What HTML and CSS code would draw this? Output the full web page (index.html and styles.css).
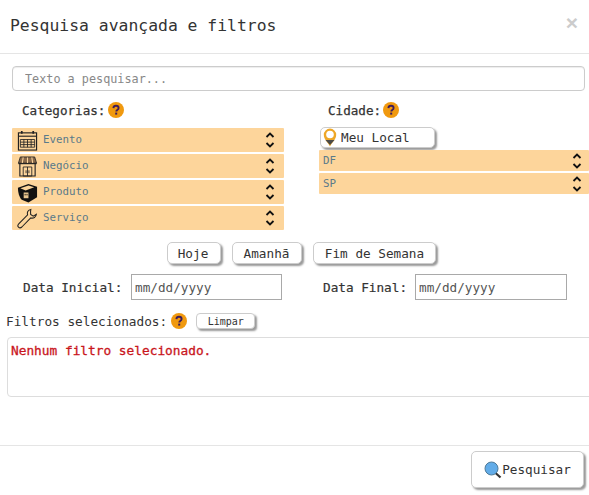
FILE: index.html
```html
<!DOCTYPE html>
<html lang="pt">
<head>
<meta charset="utf-8">
<title>Pesquisa avançada e filtros</title>
<link rel="stylesheet" href="styles.css">
</head>
<body>
<svg class="defs" width="0" height="0">
  <symbol id="help" viewBox="0 0 16 16">
    <circle cx="8" cy="8" r="8" fill="#f0990f"/>
    <path d="M5.400 6.100C5.500 4.600 6.600 3.800 8 3.800c1.500 0 2.600.9 2.600 2.100 0 1.200-.8 1.700-1.500 2.200-.6.4-.8.7-.8 1.400" fill="none" stroke="#3d1c5c" stroke-width="1.900"/>
    <rect x="7.200" y="10.600" width="2" height="2" fill="#3d1c5c"/>
  </symbol>
  <symbol id="updown" viewBox="0 0 10 18">
    <path d="M1.500 6 5 2.500 8.500 6M1.500 12 5 15.500 8.500 12" fill="none" stroke="#111" stroke-width="1.800"/>
  </symbol>
</svg>

<header class="modal-header">
  <h4 class="modal-title">Pesquisa avançada e filtros</h4>
  <span class="close">×</span>
</header>

<main class="modal-body">
  <input class="search" type="text" placeholder="Texto a pesquisar...">

  <div class="columns">
    <section class="col-left">
      <div class="label label-cat">Categorias:<svg class="help"><use href="#help"/></svg></div>
      <div class="rows">
        <div class="row row-cat">
          <svg class="cat-icon" viewBox="0 0 22 22">
            <rect x="1.500" y="3" width="19" height="18" fill="none" stroke="#222" stroke-width="1.200"/>
            <path d="M1.500 6.500h19" stroke="#222" stroke-width="1.200"/>
            <path d="M5 1v3M17 1v3" stroke="#222" stroke-width="1.800"/>
            <path d="M3.500 10h15v8h-15zM3.500 12.700h15M3.500 15.300h15M7.200 10v8M11 10v8M14.800 10v8" fill="none" stroke="#222" stroke-width=".9"/>
          </svg>
          <span class="row-text">Evento</span>
          <svg class="updown"><use href="#updown"/></svg>
        </div>
        <div class="row row-cat">
          <svg class="cat-icon" viewBox="0 0 22 22">
            <path d="M3.500 1h15l2 6.500h-19z" fill="#8a6a4a" stroke="#222" stroke-width=".9"/>
            <path d="M6.500 1.500 5.500 7.500M11 1.500v6M15.500 1.500l1 6" stroke="#fdd59b" stroke-width="1.100"/>
            <path d="M3 8v13h16V8" fill="none" stroke="#222" stroke-width="1.200"/>
            <path d="M1.500 8h19" stroke="#222" stroke-width="1.200"/>
            <path d="M6.500 11.500h9V21h-9zM11 11.500V21" fill="none" stroke="#222" stroke-width=".9"/>
            <path d="M9.500 15v3M12.500 15v3" stroke="#222" stroke-width=".9"/>
          </svg>
          <span class="row-text">Negócio</span>
          <svg class="updown"><use href="#updown"/></svg>
        </div>
        <div class="row row-cat">
          <svg class="cat-icon" viewBox="0 0 22 22">
            <path d="M1 6 12 2l9 3v11l-9 5.500-7-3C2 16 1 10 1 6z" fill="#111"/>
            <path d="M3.500 6.500 12 3.700l6 1.800-9 3.500z" fill="#fbd49b"/>
            <path d="M7 11h5v6H7z" fill="#e9c68f"/>
            <path d="M8.500 12.500v1.500M10.500 12.500v1.500" stroke="#111"/>
          </svg>
          <span class="row-text">Produto</span>
          <svg class="updown"><use href="#updown"/></svg>
        </div>
        <div class="row row-cat">
          <svg class="cat-icon" viewBox="0 0 22 22">
            <path d="M14.500 1.500c-2.800.5-4.200 2.900-3.400 5.600L1.800 16.600c-1.300 1.400-.9 2.800-.2 3.500.8.800 2.200 1 3.500-.2l9.300-9.500c2.900.8 5.500-.8 5.900-3.900l-3.300 2-2.700-1.700-.1-3z" fill="none" stroke="#222" stroke-width="1.100"/>
          </svg>
          <span class="row-text">Serviço</span>
          <svg class="updown"><use href="#updown"/></svg>
        </div>
      </div>
    </section>

    <section class="col-right">
      <div class="label label-city">Cidade:<svg class="help"><use href="#help"/></svg></div>
      <button class="btn btn-local" type="button">
        <svg class="pin" viewBox="0 0 14 19">
          <path d="M7 18.500C5 14.500.8 11.500.8 6.800a6.200 6.200 0 0 1 12.400 0C13.200 11.500 9 14.500 7 18.500z" fill="#eea727"/>
          <circle cx="7" cy="6.500" r="3.800" fill="#fff"/>
          <path d="M2.500 12h9L7 17z" fill="#4a4a48"/>
        </svg>
        Meu Local
      </button>
      <div class="rows">
        <div class="row row-city"><span class="row-text">DF</span><svg class="updown"><use href="#updown"/></svg></div>
        <div class="row row-city"><span class="row-text">SP</span><svg class="updown"><use href="#updown"/></svg></div>
      </div>
    </section>
  </div>

  <div class="quick">
    <button class="btn btn-hoje" type="button">Hoje</button>
    <button class="btn btn-amanha" type="button">Amanhã</button>
    <button class="btn btn-fim" type="button">Fim de Semana</button>
  </div>

  <div class="dates">
    <label class="date-label date-label-start">Data Inicial:</label>
    <input class="date" type="text" placeholder="mm/dd/yyyy">
    <label class="date-label date-label-end">Data Final:</label>
    <input class="date" type="text" placeholder="mm/dd/yyyy">
  </div>

  <div class="filters-head">
    <span class="filters-title">Filtros selecionados:</span>
    <svg class="help"><use href="#help"/></svg>
    <button class="btn btn-clear" type="button">Limpar</button>
  </div>
  <div class="filters-box">Nenhum filtro selecionado.</div>
</main>

<footer class="modal-footer">
  <button class="btn btn-search" type="button">
    <svg class="lens" viewBox="0 0 18 18">
      <path d="m11 11.500 5.500 5" stroke="#333" stroke-width="2.200"/>
      <circle cx="7.500" cy="7.500" r="6.500" fill="#62ace8" stroke="#4d7a99"/>
    </svg>
    Pesquisar
  </button>
</footer>
</body>
</html>
```
FILE: styles.css
```css
* { box-sizing: border-box; }
html, body { margin: 0; padding: 0; }
body {
  width: 589px;
  height: 495px;
  overflow: hidden;
  background: #fff;
  color: #333;
  font-family: "DejaVu Sans Mono", monospace;
  font-size: 12.700px;
}
.defs { display: block; height: 0; }

.modal-header {
  height: 54px;
  border-bottom: 1px solid #e5e5e5;
  padding: 0 11px 0 10px;
  display: flex;
  align-items: center;
  justify-content: space-between;
}
.modal-title {
  margin: 0 0 2px;
  font-size: 16.400px;
  font-weight: 400;
  color: #333;
}
.close {
  font-family: "Liberation Sans", sans-serif;
  font-size: 21px;
  font-weight: 700;
  color: #ccc;
  line-height: 1;
  margin: 0 0 8px;
}

.modal-body {
  height: 391px;
  padding-top: 12px;
}
.search {
  display: block;
  width: 573px;
  height: 25px;
  margin-left: 12px;
  padding: 0 12px;
  border: 1px solid #ccc;
  border-radius: 4px;
  box-shadow: inset 0 1px 1px rgba(0,0,0,.075);
  font: 11.800px "DejaVu Sans Mono", monospace;
  color: #555;
}
.search::placeholder { color: #888; opacity: 1; }

.columns {
  display: flex;
  padding-left: 12px;
  margin-top: 9px;
}
.col-left { width: 272px; }
.col-right { width: 270px; margin-left: 35px; flex: none; }

.label {
  display: flex;
  align-items: center;
  height: 20px;
  font-size: 12.600px;
  font-weight: 500;
  color: #333;
  -webkit-text-stroke: .25px #333;
}
.label-cat { padding-left: 10px; margin-bottom: 8px; }
.label-city { padding-left: 9px; margin-bottom: 7px; }
.label-cat .help { margin-left: 3px; }
.label-city .help { margin-left: 2px; }
.help { width: 16px; height: 16px; margin-left: 1px; flex: none; }

.rows { display: flex; flex-direction: column; gap: 2px; }
.row {
  display: flex;
  align-items: center;
  background: #fdd59b;
  border-radius: 1px;
}
.row-cat { height: 24px; padding: 0 9px 0 5px; }
.row-city { height: 21px; padding: 0 7px 0 4px; }
.row-text {
  flex: 1;
  font-size: 10.800px;
  line-height: 14px;
  color: #5a7a8a;
}
.row-cat .row-text { margin-bottom: 1px; }
.cat-icon { width: 21px; height: 21px; margin-right: 5px; flex: none; }
.updown { width: 10px; height: 18px; flex: none; }

.btn {
  font-family: "DejaVu Sans Mono", monospace;
  font-size: 12.700px;
  color: #333;
  background: #fff;
  border: 1px solid #ccc;
  border-radius: 5px;
  box-shadow: 2px 2px 2px #999;
  padding: 0;
}
.btn-local {
  display: flex;
  align-items: center;
  width: 115px;
  height: 21px;
  margin: 0 0 2px 1px;
  padding-left: 2px;
  gap: 4px;
}
.pin { width: 14px; height: 19px; flex: none; }

.quick {
  display: flex;
  margin-top: 12px;
  padding-left: 167px;
}
.btn-hoje { width: 54px; height: 22px; padding-right: 2px; }
.btn-amanha { width: 70px; height: 22px; margin-left: 11px; padding-right: 1px; }
.btn-fim { width: 123px; height: 22px; margin-left: 11px; }

.dates {
  display: flex;
  align-items: center;
  margin-top: 10px;
  padding-left: 23px;
}
.date-label {
  font-size: 12.700px;
  color: #333;
  -webkit-text-stroke: .2px #333;
}
.date-label-start { width: 108px; }
.date-label-end { width: 92px; margin-left: 41px; }
.date {
  width: 151px;
  height: 26px;
  border: 1px solid #a9a9a9;
  padding: 0 3px;
  font: 12.700px "DejaVu Sans Mono", monospace;
}
.date-label-end + .date { width: 152px; }
.date::placeholder { color: #555; opacity: 1; }

.filters-head {
  display: flex;
  align-items: center;
  height: 18px;
  margin-top: 12px;
  padding-left: 6px;
}
.filters-title { font-size: 12.750px; color: #333; }
.filters-head .help { margin-left: 4px; }
.btn-clear {
  width: 59px;
  height: 16px;
  margin-left: 9px;
  font-size: 10px;
  border-radius: 4px;
}
.filters-box {
  width: 590px;
  height: 60px;
  margin: 7px 0 0 7px;
  border: 1px solid #ddd;
  border-radius: 4px;
  padding: 5px 3px;
  font-size: 12.800px;
  font-weight: 500;
  color: #c9161d;
  -webkit-text-stroke: .3px #c9161d;
}

.modal-footer {
  height: 50px;
  border-top: 1px solid #e5e5e5;
  display: flex;
  justify-content: flex-end;
  padding: 5px 5px 0 0;
}
.btn-search {
  display: flex;
  align-items: center;
  justify-content: center;
  gap: 0;
  width: 113px;
  height: 37px;
}
.lens { width: 18px; height: 18px; flex: none; }
```
